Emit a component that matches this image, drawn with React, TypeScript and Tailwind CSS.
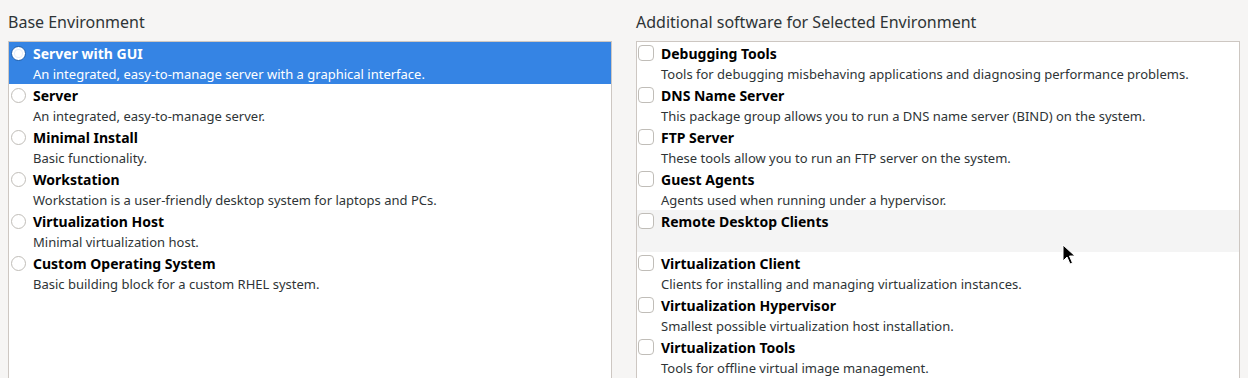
const environments = [
  { name: "Server with GUI", desc: "An integrated, easy-to-manage server with a graphical interface." },
  { name: "Server", desc: "An integrated, easy-to-manage server." },
  { name: "Minimal Install", desc: "Basic functionality." },
  { name: "Workstation", desc: "Workstation is a user-friendly desktop system for laptops and PCs." },
  { name: "Virtualization Host", desc: "Minimal virtualization host." },
  { name: "Custom Operating System", desc: "Basic building block for a custom RHEL system." },
];

const addons = [
  { name: "Debugging Tools", desc: "Tools for debugging misbehaving applications and diagnosing performance problems." },
  { name: "DNS Name Server", desc: "This package group allows you to run a DNS name server (BIND) on the system." },
  { name: "FTP Server", desc: "These tools allow you to run an FTP server on the system." },
  { name: "Guest Agents", desc: "Agents used when running under a hypervisor." },
  { name: "Remote Desktop Clients", desc: "" },
  { name: "Virtualization Client", desc: "Clients for installing and managing virtualization instances." },
  { name: "Virtualization Hypervisor", desc: "Smallest possible virtualization host installation." },
  { name: "Virtualization Tools", desc: "Tools for offline virtual image management." },
];

export default function App() {
  return (
    <div
      className="relative h-[378px] overflow-hidden bg-[#f6f5f4] px-2 flex gap-6 text-[#2e3436]"
      style={{ fontFamily: '"Noto Sans", "Open Sans", sans-serif' }}
    >
      {/* Base environment */}
      <div className="flex-1 flex flex-col">
        <div className="h-[41px] flex items-center pt-[3px] text-[16px] leading-5">Base Environment</div>
        <div className="flex-1 bg-white border border-[#cdc7c2] border-b-0">
          {environments.map((env, i) => (
            <RadioRow key={env.name} name={env.name} desc={env.desc} selected={i === 0} />
          ))}
        </div>
      </div>

      {/* Add-ons */}
      <div className="flex-1 flex flex-col">
        <div className="h-[41px] flex items-center pt-[3px] text-[16px] leading-5">Additional software for Selected Environment</div>
        <div className="flex-1 bg-white border border-[#cdc7c2] border-b-0">
          {addons.map((a) => (
            <CheckRow key={a.name} name={a.name} desc={a.desc} hover={a.name === "Remote Desktop Clients"} />
          ))}
        </div>
      </div>

      {/* Mouse pointer */}
      <svg className="absolute left-[1062px] top-[244px]" width="14" height="22" viewBox="0 0 14 22">
        <path d="M1 1 L1 17 L5 13 L8 20 L10.5 19 L7.5 12 L13 12 Z" fill="#000" stroke="#fff" strokeWidth="1" strokeLinejoin="round" />
      </svg>
    </div>
  );
}

function RadioRow({ name, desc, selected }: { name: string; desc: string; selected: boolean }) {
  return (
    <div className={`h-[42px] flex pt-[2px] ${selected ? "bg-[#3584e4] text-white" : ""}`}>
      <div className="w-[24px] shrink-0 pl-[2px] pt-[2px]">
        {selected ? (
          <div className="w-[15px] h-[15px] rounded-full border border-[#1b5cab] bg-white flex items-center justify-center">
            <div className="w-[7px] h-[7px] rounded-full bg-white shadow-[0_0_0_1px_#e6eefa]" />
          </div>
        ) : (
          <div className="w-[15px] h-[15px] rounded-full border border-[#c0bdb8] bg-white" />
        )}
      </div>
      <div className="flex flex-col">
        <div className={`text-[14px] leading-5 font-bold ${selected ? "text-white" : "text-black"}`}>{name}</div>
        <div className={`text-[13px] leading-5 ${selected ? "text-white" : "text-[#2e3436]"}`}>{desc}</div>
      </div>
    </div>
  );
}

function CheckRow({ name, desc, hover }: { name: string; desc: string; hover: boolean }) {
  return (
    <div className={`h-[42px] flex pt-[2px] ${hover ? "bg-[#f4f4f4]" : ""}`}>
      <div className="w-[24px] shrink-0 pl-[1px] pt-[1px]">
        <div className="w-[16px] h-[16px] rounded-[4px] border border-[#c0bdb8] bg-white" />
      </div>
      <div className="flex flex-col">
        <div className="text-[14px] leading-5 font-bold text-black">{name}</div>
        <div className="text-[13px] leading-5 text-[#2e3436]">{desc}</div>
      </div>
    </div>
  );
}
